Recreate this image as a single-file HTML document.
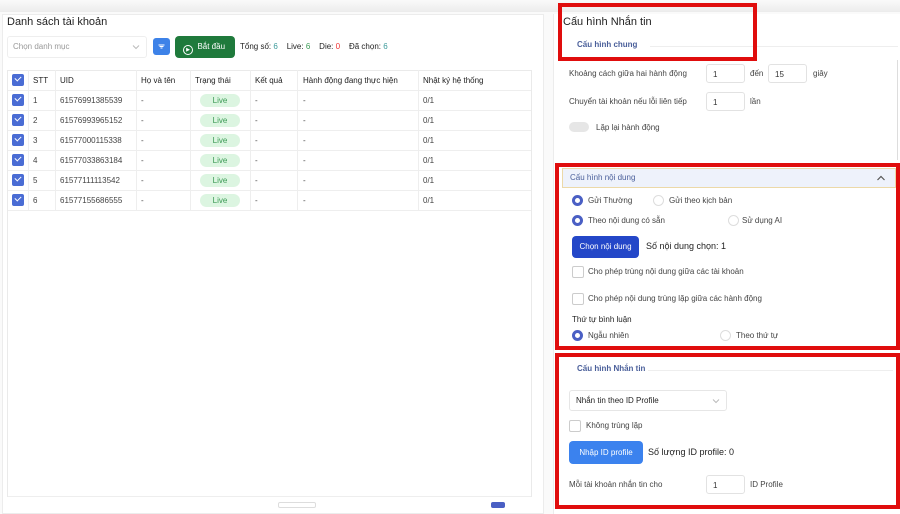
<!DOCTYPE html>
<html><head><meta charset="utf-8"><style>
*{margin:0;padding:0;box-sizing:border-box}
body{width:900px;height:506px;overflow:hidden;background:#fafafa;font-family:"Liberation Sans",sans-serif;position:relative;color:#333}
.a{position:absolute;white-space:nowrap}
.t{font-size:8px;color:#444}
.cb{position:absolute;width:12px;height:12px;border-radius:2px;background:#4a6cd4}
.cb:after{content:"";position:absolute;left:3px;top:2px;width:5px;height:3px;border-left:1.6px solid #fff;border-bottom:1.6px solid #fff;transform:rotate(-45deg)}
.ecb{position:absolute;width:12px;height:12px;border:1px solid #ccc;border-radius:2px;background:#fff}
.live{position:absolute;width:40px;height:13px;border-radius:7px;background:#dcf5e1;color:#3a9a54;font-size:8px;text-align:center;line-height:13px}
.inp{position:absolute;height:19px;border:1px solid #e2e2e2;border-radius:3px;background:#fff;font-size:8px;padding:5px 6px;color:#333}
.rad{position:absolute;width:11px;height:11px;border-radius:50%;border:3px solid #4a5fc4;background:#fff}
.erad{position:absolute;width:11px;height:11px;border-radius:50%;border:1px solid #ddd;background:#fff}
.red{position:absolute;border:4px solid #e00d0d}
.vl{position:absolute;top:70px;height:140px;width:1px;background:#eee}
.hl{position:absolute;left:8px;width:523px;height:1px;background:#eee}
</style></head><body>
<div class="a" style="left:0;top:0;width:900px;height:12px;background:linear-gradient(#fafafa,#ececec)"></div>
<div class="a" style="left:2px;top:14px;width:542px;height:500px;background:#fff;border:1px solid #ececec"></div>
<div class="a" style="left:7px;top:16px;font-size:11px;color:#222">Danh sách tài khoản</div>
<div class="a" style="left:7px;top:36px;width:140px;height:22px;border:1px solid #eee;border-radius:3px;background:#fff"></div>
<div class="a" style="left:13px;top:42px;font-size:8px;color:#999">Chọn danh mục</div>
<svg class="a" style="left:132px;top:44px" width="8" height="6"><path d="M1 1.5L4 4.5L7 1.5" fill="none" stroke="#bbb" stroke-width="1"/></svg>
<div class="a" style="left:153px;top:38px;width:17px;height:17px;background:#3d82e8;border-radius:3px"></div>
<svg class="a" style="left:156px;top:41px" width="11" height="11"><path d="M2.5 4h6M3.5 5.5h4M4.5 7h2" stroke="#fff" stroke-width="0.9"/></svg>
<div class="a" style="left:175px;top:36px;width:60px;height:22px;background:#1f7a3c;border-radius:4px;color:#fff;font-size:8px;line-height:22px;padding-left:8px"><span style="display:inline-block;width:10px;height:10px;border:1px solid #fff;border-radius:50%;vertical-align:-2px;font-size:5px;text-align:center;line-height:8px">▶</span>&nbsp; Bắt đầu</div>
<div class="a" style="left:240px;top:42px;font-size:8px;color:#222">Tổng số: <span style="color:#3a9a9a">6</span>&nbsp;&nbsp;&nbsp; Live: <span style="color:#3a9a54">6</span>&nbsp;&nbsp;&nbsp; Die: <span style="color:#e33">0</span>&nbsp;&nbsp;&nbsp; Đã chọn: <span style="color:#3a9a9a">6</span></div>
<div class="a" style="left:7px;top:70px;width:525px;height:427px;border:1px solid #eaeaea;background:#fff"></div>
<div class="hl" style="top:90px"></div><div class="hl" style="top:110px"></div><div class="hl" style="top:130px"></div><div class="hl" style="top:150px"></div><div class="hl" style="top:170px"></div><div class="hl" style="top:190px"></div><div class="hl" style="top:210px"></div>
<div class="hl" style="top:496px"></div>
<div class="vl" style="left:28px"></div><div class="vl" style="left:55px"></div><div class="vl" style="left:136px"></div><div class="vl" style="left:190px"></div><div class="vl" style="left:250px"></div><div class="vl" style="left:297px"></div><div class="vl" style="left:418px"></div>
<div class="cb" style="left:12px;top:74px"></div>
<div class="a t" style="left:33px;top:76px;color:#222">STT</div>
<div class="a t" style="left:60px;top:76px;color:#222">UID</div>
<div class="a t" style="left:141px;top:76px;color:#222">Họ và tên</div>
<div class="a t" style="left:195px;top:76px;color:#222">Trạng thái</div>
<div class="a t" style="left:255px;top:76px;color:#222">Kết quả</div>
<div class="a t" style="left:303px;top:76px;color:#222">Hành động đang thực hiện</div>
<div class="a t" style="left:423px;top:76px;color:#222">Nhật ký hệ thống</div>
<div class="cb" style="left:12px;top:94px"></div><div class="a t" style="left:33px;top:96px">1</div><div class="a t" style="left:60px;top:96px">61576991385539</div><div class="a t" style="left:141px;top:96px">-</div><div class="live" style="left:200px;top:94px">Live</div><div class="a t" style="left:255px;top:96px">-</div><div class="a t" style="left:303px;top:96px">-</div><div class="a t" style="left:423px;top:96px">0/1</div>
<div class="cb" style="left:12px;top:114px"></div><div class="a t" style="left:33px;top:116px">2</div><div class="a t" style="left:60px;top:116px">61576993965152</div><div class="a t" style="left:141px;top:116px">-</div><div class="live" style="left:200px;top:114px">Live</div><div class="a t" style="left:255px;top:116px">-</div><div class="a t" style="left:303px;top:116px">-</div><div class="a t" style="left:423px;top:116px">0/1</div>
<div class="cb" style="left:12px;top:134px"></div><div class="a t" style="left:33px;top:136px">3</div><div class="a t" style="left:60px;top:136px">61577000115338</div><div class="a t" style="left:141px;top:136px">-</div><div class="live" style="left:200px;top:134px">Live</div><div class="a t" style="left:255px;top:136px">-</div><div class="a t" style="left:303px;top:136px">-</div><div class="a t" style="left:423px;top:136px">0/1</div>
<div class="cb" style="left:12px;top:154px"></div><div class="a t" style="left:33px;top:156px">4</div><div class="a t" style="left:60px;top:156px">61577033863184</div><div class="a t" style="left:141px;top:156px">-</div><div class="live" style="left:200px;top:154px">Live</div><div class="a t" style="left:255px;top:156px">-</div><div class="a t" style="left:303px;top:156px">-</div><div class="a t" style="left:423px;top:156px">0/1</div>
<div class="cb" style="left:12px;top:174px"></div><div class="a t" style="left:33px;top:176px">5</div><div class="a t" style="left:60px;top:176px">61577111113542</div><div class="a t" style="left:141px;top:176px">-</div><div class="live" style="left:200px;top:174px">Live</div><div class="a t" style="left:255px;top:176px">-</div><div class="a t" style="left:303px;top:176px">-</div><div class="a t" style="left:423px;top:176px">0/1</div>
<div class="cb" style="left:12px;top:194px"></div><div class="a t" style="left:33px;top:196px">6</div><div class="a t" style="left:60px;top:196px">61577155686555</div><div class="a t" style="left:141px;top:196px">-</div><div class="live" style="left:200px;top:194px">Live</div><div class="a t" style="left:255px;top:196px">-</div><div class="a t" style="left:303px;top:196px">-</div><div class="a t" style="left:423px;top:196px">0/1</div>
<div class="a" style="left:278px;top:502px;width:38px;height:6px;border:1px solid #ddd;border-radius:2px"></div>
<div class="a" style="left:491px;top:502px;width:14px;height:6px;background:#4a5fc4;border-radius:2px"></div>
<div class="a" style="left:553px;top:14px;width:347px;height:500px;background:#fff;border-left:1px solid #ececec"></div>
<div class="a" style="left:897px;top:60px;width:1px;height:100px;background:#ddd"></div>
<div class="a" style="left:563px;top:16px;font-size:11px;color:#222">Cấu hình Nhắn tin</div>
<div class="a" style="left:577px;top:40px;font-size:8px;color:#4a5f9a;font-weight:bold">Cấu hình chung</div>
<div class="a" style="left:650px;top:46px;width:248px;height:1px;background:#eee"></div>
<div class="a t" style="left:569px;top:69px">Khoảng cách giữa hai hành động</div>
<div class="inp" style="left:706px;top:64px;width:39px">1</div>
<div class="a t" style="left:750px;top:69px">đến</div>
<div class="inp" style="left:768px;top:64px;width:39px">15</div>
<div class="a t" style="left:813px;top:69px">giây</div>
<div class="a t" style="left:569px;top:97px">Chuyển tài khoản nếu lỗi liên tiếp</div>
<div class="inp" style="left:706px;top:92px;width:39px">1</div>
<div class="a t" style="left:750px;top:97px">lần</div>
<div class="a" style="left:569px;top:122px;width:20px;height:10px;border-radius:5px;background:#e6e6e6"></div>
<div class="a t" style="left:596px;top:123px">Lặp lại hành động</div>
<div class="a" style="left:562px;top:168px;width:334px;height:20px;background:#eef2fb;border:1px solid #ecd9a8"></div>
<div class="a" style="left:570px;top:173px;font-size:8px;color:#4a5f9a">Cấu hình nội dung</div>
<svg class="a" style="left:876px;top:174px" width="10" height="8"><path d="M1.5 6L5 2.5L8.5 6" fill="none" stroke="#555" stroke-width="1.2"/></svg>
<div class="rad" style="left:572px;top:195px"></div><div class="a t" style="left:588px;top:196px">Gửi Thường</div>
<div class="erad" style="left:653px;top:195px"></div><div class="a t" style="left:669px;top:196px">Gửi theo kịch bản</div>
<div class="rad" style="left:572px;top:215px"></div><div class="a t" style="left:588px;top:216px">Theo nội dung có sẵn</div>
<div class="erad" style="left:728px;top:215px"></div><div class="a t" style="left:742px;top:216px">Sử dụng AI</div>
<div class="a" style="left:572px;top:236px;width:67px;height:22px;background:#2447c8;border-radius:4px;color:#fff;font-size:8px;text-align:center;line-height:22px">Chọn nội dung</div>
<div class="a" style="left:646px;top:241px;font-size:9px;color:#222">Số nội dung chọn: 1</div>
<div class="ecb" style="left:572px;top:266px"></div><div class="a t" style="left:588px;top:267px">Cho phép trùng nội dung giữa các tài khoản</div>
<div class="ecb" style="left:572px;top:293px"></div><div class="a t" style="left:588px;top:294px">Cho phép nội dung trùng lặp giữa các hành động</div>
<div class="a t" style="left:572px;top:315px;color:#222">Thứ tự bình luận</div>
<div class="rad" style="left:572px;top:330px"></div><div class="a t" style="left:588px;top:331px">Ngẫu nhiên</div>
<div class="erad" style="left:720px;top:330px"></div><div class="a t" style="left:736px;top:331px">Theo thứ tự</div>
<div class="a" style="left:577px;top:364px;font-size:8px;color:#4a5f9a;font-weight:bold">Cấu hình Nhắn tin</div>
<div class="a" style="left:648px;top:370px;width:245px;height:1px;background:#eee"></div>
<div class="a" style="left:569px;top:390px;width:158px;height:21px;border:1px solid #e6e6e6;border-radius:3px"></div>
<div class="a t" style="left:576px;top:396px;color:#222">Nhắn tin theo ID Profile</div>
<svg class="a" style="left:712px;top:398px" width="8" height="6"><path d="M1 1.5L4 4.5L7 1.5" fill="none" stroke="#bbb" stroke-width="1"/></svg>
<div class="ecb" style="left:569px;top:420px"></div><div class="a t" style="left:586px;top:421px">Không trùng lặp</div>
<div class="a" style="left:569px;top:441px;width:74px;height:23px;background:#3b82ee;border-radius:4px;color:#fff;font-size:8px;text-align:center;line-height:23px">Nhập ID profile</div>
<div class="a" style="left:648px;top:447px;font-size:9px;color:#222">Số lượng ID profile: 0</div>
<div class="a t" style="left:569px;top:480px">Mỗi tài khoản nhắn tin cho</div>
<div class="inp" style="left:706px;top:475px;width:39px">1</div>
<div class="a t" style="left:750px;top:480px">ID Profile</div>
<div class="red" style="left:558px;top:3px;width:199px;height:58px"></div>
<div class="red" style="left:555px;top:163px;width:345px;height:187px"></div>
<div class="red" style="left:555px;top:353px;width:345px;height:156px"></div>
</body></html>
